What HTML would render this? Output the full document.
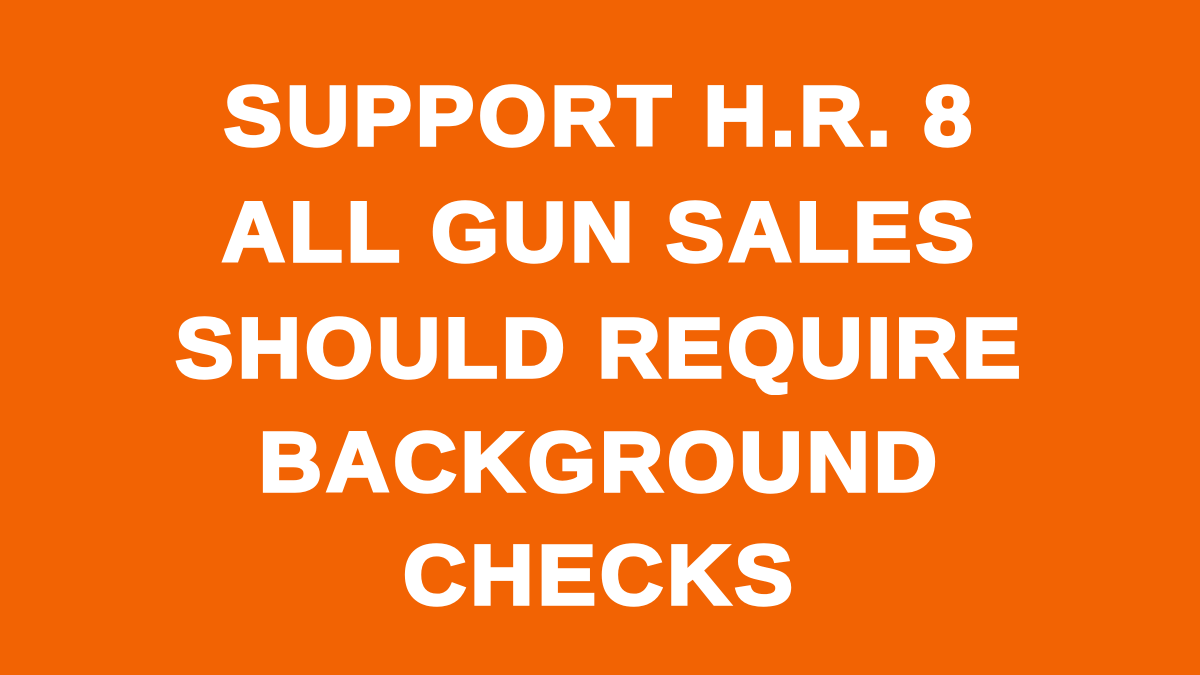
<!DOCTYPE html>
<html><head><meta charset="utf-8"><style>
html,body{margin:0;padding:0}
body{width:1200px;height:675px;background:#F26303;position:relative;overflow:hidden;font-family:"Liberation Sans",sans-serif;font-weight:bold;color:#fff}
.l{position:absolute;left:0;width:1200px;text-align:center;font-size:84px;line-height:84px;letter-spacing:4px;white-space:nowrap;-webkit-text-stroke:3.5px #fff;transform:scaleX(1.04)}
</style></head><body>
<div class="l" style="top:74px">SUPPORT H.R. 8</div>
<div class="l" style="top:190px">ALL GUN SALES</div>
<div class="l" style="top:306px">SHOULD REQUIRE</div>
<div class="l" style="top:420px">BACKGROUND</div>
<div class="l" style="top:533px">CHECKS</div>
</body></html>
